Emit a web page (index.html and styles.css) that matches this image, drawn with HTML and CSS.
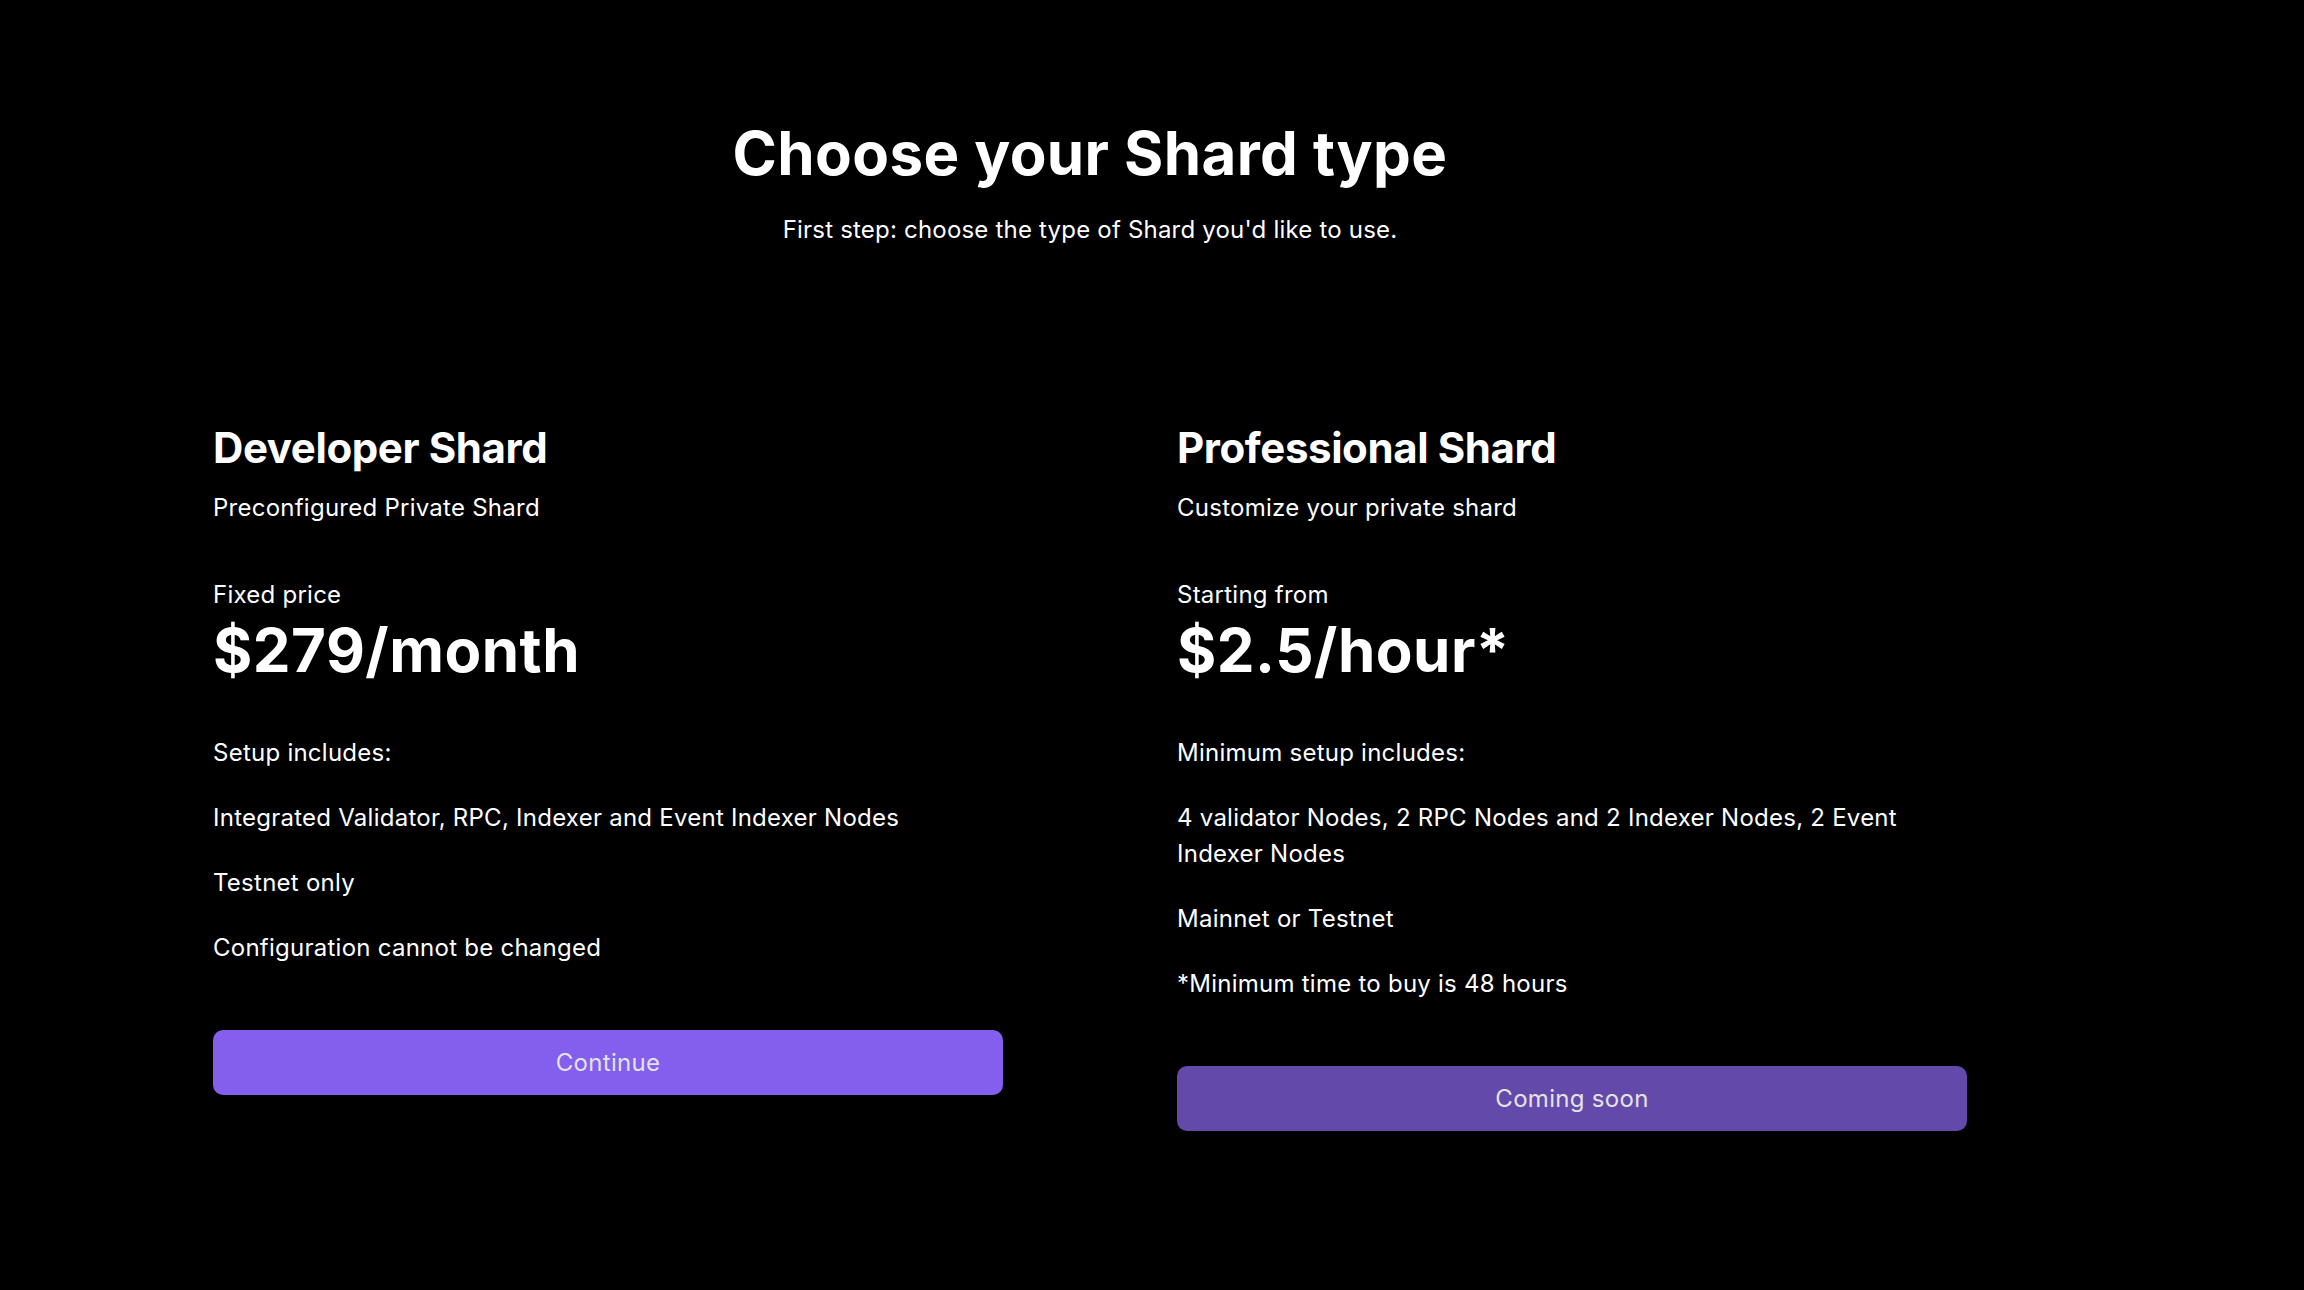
FILE: index.html
```html
<!DOCTYPE html>
<html lang="en">
<head>
<meta charset="utf-8">
<title>Choose your Shard type</title>
<link rel="stylesheet" href="styles.css">
</head>
<body>
<main class="page">
  <header class="intro">
    <h1 class="title">Choose your Shard type</h1>
    <p class="lead">First step: choose the type of Shard you'd like to use.</p>
  </header>
  <section class="plans">
    <article class="plan">
      <h2 class="plan-name">Developer Shard</h2>
      <p class="plan-desc">Preconfigured Private Shard</p>
      <p class="price-label">Fixed price</p>
      <p class="price">$279/month</p>
      <p class="setup">Setup includes:</p>
      <ul class="features">
        <li>Integrated Validator, RPC, Indexer and Event Indexer Nodes</li>
        <li>Testnet only</li>
        <li>Configuration cannot be changed</li>
      </ul>
      <button class="btn btn-primary" type="button">Continue</button>
    </article>
    <article class="plan">
      <h2 class="plan-name">Professional Shard</h2>
      <p class="plan-desc">Customize your private shard</p>
      <p class="price-label">Starting from</p>
      <p class="price">$2.5/hour*</p>
      <p class="setup">Minimum setup includes:</p>
      <ul class="features">
        <li>4 validator Nodes, 2 RPC Nodes and 2 Indexer Nodes, 2 Event Indexer Nodes</li>
        <li>Mainnet or Testnet</li>
        <li>*Minimum time to buy is 48 hours</li>
      </ul>
      <button class="btn btn-disabled" type="button">Coming soon</button>
    </article>
  </section>
</main>
</body>
</html>
```

FILE: styles.css
```css
* { box-sizing: border-box; }
html, body {
  margin: 0;
  padding: 0;
  background: #000;
  color: #fff;
  font-family: Inter, "Noto Sans", "Liberation Sans", sans-serif;
}
.page {
  width: 2180px;
  min-height: 1290px;
  padding-top: 117px;
}
.intro {
  display: flex;
  flex-direction: column;
  align-items: center;
}
.title {
  margin: 0;
  font-size: 60px;
  line-height: 72px;
  font-weight: 700;
  letter-spacing: 0.4px;
}
.lead {
  margin: 23px 0 0;
  font-size: 24px;
  line-height: 36px;
  font-weight: 400;
  letter-spacing: 0.2px;
}
.plans {
  display: grid;
  grid-template-columns: 790px 790px;
  column-gap: 174px;
  justify-content: center;
  align-items: start;
  margin-top: 175px;
}
.plan {
  display: flex;
  flex-direction: column;
  letter-spacing: 0.25px;
}
.plan-name {
  margin: 0;
  font-size: 42px;
  line-height: 50px;
  font-weight: 700;
  letter-spacing: -0.4px;
}
.plan-desc {
  margin: 17px 0 0;
  font-size: 24px;
  line-height: 36px;
}
.price-label {
  margin: 51px 0 0;
  font-size: 24px;
  line-height: 36px;
}
.price {
  margin: 1px 0 0;
  font-size: 60px;
  line-height: 72px;
  font-weight: 700;
  letter-spacing: 0.5px;
}
.setup {
  margin: 49px 0 0;
  font-size: 24px;
  line-height: 36px;
}
.features {
  list-style: none;
  margin: 0;
  padding: 0;
  font-size: 24px;
  line-height: 36px;
}
.features li {
  margin-top: 29px;
}
.btn {
  margin-top: 64px;
  height: 65px;
  width: 100%;
  border: 0;
  border-radius: 10px;
  font-family: inherit;
  font-size: 24px;
  letter-spacing: 0.3px;
  color: #e3e3e3;
  cursor: pointer;
}
.btn-primary { background: #845eec; }
.btn-disabled { background: #6349aa; }
```
